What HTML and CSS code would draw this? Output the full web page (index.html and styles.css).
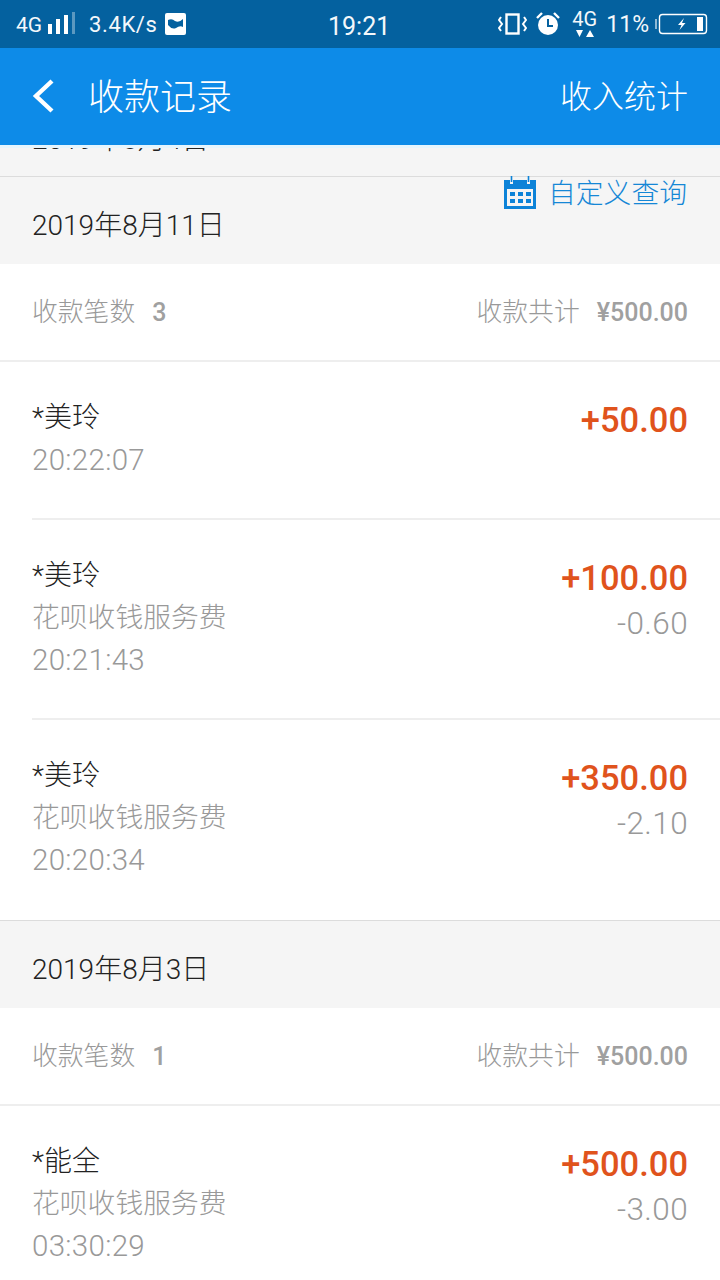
FILE: index.html
```html
<!DOCTYPE html>
<html>
<head>
  <title>收款记录</title>
  <link rel="stylesheet" href="styles.css">
</head>
<body>
  <div class="status-bar">
    <div class="status-left">
      <span class="net">4G</span>
      <svg class="signal" width="30" height="24" viewBox="0 0 30 24">
        <rect x="1" y="12" width="4" height="10" fill="#fff"/>
        <rect x="9" y="7" width="4" height="15" fill="#fff"/>
        <rect x="17" y="3" width="4" height="19" fill="#fff"/>
        <rect x="25" y="0" width="3" height="22" fill="#fff" opacity="0.35"/>
      </svg>
      <span class="speed">3.4K/s</span>
      <svg class="pic" width="21" height="22" viewBox="0 0 21 22">
        <rect width="21" height="22" rx="2" fill="#fff"/>
        <path d="M3 7 Q7 5 10 8 Q14 10 18 6 L18 14 Q15 12 11 15 Q7 17 3 12 Z" fill="#04619f"/>
      </svg>
    </div>
    <div class="status-time">19:21</div>
    <div class="status-right">
      <svg width="29" height="22" viewBox="0 0 29 22">
        <rect x="8.5" y="1.5" width="12" height="19" fill="none" stroke="#fff" stroke-width="2.4"/>
        <path d="M3 4 L1 7 L4 11 L1 15 L3 18 M26 4 L28 7 L25 11 L28 15 L26 18" fill="none" stroke="#fff" stroke-width="2"/>
      </svg>
      <svg class="alarm" width="24" height="24" viewBox="0 0 24 24">
        <circle cx="12" cy="13" r="10" fill="#fff"/>
        <path d="M1 6 L6 1 M23 6 L18 1" stroke="#fff" stroke-width="2.4"/>
        <path d="M12 7 V14 H17" fill="none" stroke="#04619f" stroke-width="2"/>
      </svg>
      <div class="net-arrows">
        <span>4G</span>
        <svg width="18" height="9" viewBox="0 0 18 9">
          <path d="M0 1 H7 L3.5 8 Z M10 8 H18 L14 1 Z" fill="#fff"/>
        </svg>
      </div>
      <span class="percent">11%</span>
      <svg class="battery" width="53" height="22" viewBox="0 0 53 22">
        <path d="M1 6 V16" stroke="#fff" stroke-width="1.6" opacity="0.7"/>
        <rect x="4.5" y="1.5" width="47" height="19" rx="3" fill="none" stroke="#fff" stroke-width="1.4"/>
        <rect x="42" y="4" width="6" height="14" fill="#fff"/>
        <path d="M29 5 L23 12 H26.5 L24.5 17 L30.5 10 H27 Z" fill="#fff"/>
      </svg>
    </div>
  </div>

  <div class="app-bar">
    <svg class="back" width="24" height="34" viewBox="0 0 24 34">
      <path d="M21 2 L5 17 L21 32" fill="none" stroke="#fff" stroke-width="4.4"/>
    </svg>
    <div class="app-title">收款记录</div>
    <div class="app-action">收入统计</div>
  </div>

  <div class="list">
    <div class="clipped-date"><span>2019年8月4日</span></div>

    <div class="date-row first-date">
      <span>2019年8月11日</span>
      <div class="custom-query">
        <svg width="34" height="34" viewBox="0 0 34 34">
          <path d="M1 4 H7 V8 H10 V4 H24 V8 H27 V4 H33 V33 H1 Z" fill="#0d83d8"/>
          <rect x="4" y="13" width="26" height="17" fill="#f5f5f5"/>
          <g fill="#0d83d8">
            <rect x="7" y="16" width="5" height="4"/>
            <rect x="15" y="16" width="5" height="4"/>
            <rect x="23" y="16" width="5" height="4"/>
            <rect x="7" y="23" width="5" height="4"/>
            <rect x="15" y="23" width="5" height="4"/>
            <rect x="23" y="23" width="5" height="4"/>
          </g>
          <path d="M8.5 0 V6 M25.5 0 V6" stroke="#0d83d8" stroke-width="1.6"/>
        </svg>
        <span>自定义查询</span>
      </div>
    </div>
    <div class="summary">
      <div class="sum-left">收款笔数<b>3</b></div>
      <div class="sum-right">收款共计<b>¥500.00</b></div>
    </div>
    <div class="record short">
      <div class="rec-left">
        <div class="name">*美玲</div>
        <div class="sub time">20:22:07</div>
      </div>
      <div class="rec-right">
        <div class="amount">+50.00</div>
      </div>
    </div>
    <div class="record">
      <div class="rec-left">
        <div class="name">*美玲</div>
        <div class="sub">花呗收钱服务费</div>
        <div class="sub time">20:21:43</div>
      </div>
      <div class="rec-right">
        <div class="amount">+100.00</div>
        <div class="fee">-0.60</div>
      </div>
    </div>
    <div class="record last">
      <div class="rec-left">
        <div class="name">*美玲</div>
        <div class="sub">花呗收钱服务费</div>
        <div class="sub time">20:20:34</div>
      </div>
      <div class="rec-right">
        <div class="amount">+350.00</div>
        <div class="fee">-2.10</div>
      </div>
    </div>

    <div class="date-row">
      <span>2019年8月3日</span>
    </div>
    <div class="summary">
      <div class="sum-left">收款笔数<b>1</b></div>
      <div class="sum-right">收款共计<b>¥500.00</b></div>
    </div>
    <div class="record last">
      <div class="rec-left">
        <div class="name">*能全</div>
        <div class="sub">花呗收钱服务费</div>
        <div class="sub time">03:30:29</div>
      </div>
      <div class="rec-right">
        <div class="amount">+500.00</div>
        <div class="fee">-3.00</div>
      </div>
    </div>
  </div>
</body>
</html>
```

FILE: styles.css
```css
* {
  box-sizing: border-box;
}

html, body {
  height: 1280px;
  overflow: hidden;
}

body {
  margin: 0;
  background-color: #fff;
  font-family: Roboto, "Noto Sans CJK SC", sans-serif;
  color: #333;
}

/* Status bar */
.status-bar {
  height: 48px;
  background-color: #04619f;
  color: #f4f8fb;
  display: flex;
  align-items: center;
  justify-content: space-between;
  padding: 0 12px 0 16px;
  position: relative;
}

.status-left,
.status-right {
  display: flex;
  align-items: center;
}

.net {
  font-size: 21px;
  margin-top: 2px;
}

.signal {
  margin-left: 5px;
}

.speed {
  font-size: 22px;
  letter-spacing: 0.6px;
  margin-left: 12px;
}

.pic {
  margin-left: 8px;
}

.status-time {
  font-size: 25px;
  position: absolute;
  left: 328px;
  top: 12px;
}

.alarm {
  margin-left: 9px;
}

.net-arrows {
  display: flex;
  flex-direction: column;
  align-items: center;
  margin-left: 11px;
  font-size: 20px;
  line-height: 19px;
  width: 27px;
}

.net-arrows svg {
  display: block;
}

.percent {
  font-size: 23px;
  margin-left: 8px;
}

.battery {
  margin-left: 6px;
}

/* App bar */
.app-bar {
  height: 97px;
  background-color: #0d8be8;
  color: #fff;
  display: flex;
  align-items: center;
  padding: 0 32px;
  position: relative;
  z-index: 2;
}

.back {
  flex: none;
  margin-left: -1px;
  margin-bottom: 1px;
}

.app-title {
  font-size: 36px;
  margin-left: 33px;
  margin-bottom: 6px;
  flex: 1;
  font-weight: 300;
}

.app-action {
  font-size: 32px;
  margin-bottom: 6px;
  font-weight: 300;
}

/* List */
.list {
  background-color: #fff;
}

.clipped-date {
  height: 31px;
  background-color: #f5f5f5;
  border-top: 3px solid #e6f5fd;
  padding-left: 32px;
  overflow: hidden;
  font-size: 28px;
  font-weight: 300;
  line-height: 30px;
  color: #222;
}

.clipped-date span {
  display: block;
  margin-top: -23px;
}

.date-row {
  height: 88px;
  background-color: #f5f5f5;
  border-top: 1px solid #dcdcdc;
  display: flex;
  align-items: center;
  padding: 4px 32px 0;
  font-size: 28px;
  font-weight: 300;
  color: #222;
  position: relative;
}

.custom-query {
  position: absolute;
  right: 33px;
  top: -1px;
  display: flex;
  align-items: center;
  color: #1587d6;
  font-size: 27.8px;
  height: 34px;
}

.custom-query svg {
  margin-right: 11px;
}

.custom-query span {
  margin-top: -5px;
}

.summary {
  height: 98px;
  border-bottom: 2px solid #eee;
  display: flex;
  align-items: center;
  justify-content: space-between;
  padding: 0 32px 6px 32px;
  font-size: 25.8px;
  font-weight: 300;
  color: #999;
}

.summary b {
  font-weight: 500;
  font-size: 25px;
  color: #a0a0a0;
}

.sum-left b {
  margin-left: 17px;
}

.sum-right b {
  margin-left: 17px;
}

/* Records */
.record {
  height: 200px;
  padding: 35px 32px 0 0;
  margin-left: 32px;
  border-bottom: 2px solid #eee;
  display: flex;
  justify-content: space-between;
}

.record.short {
  height: 158px;
}

.record.last {
  margin-left: 0;
  padding-left: 32px;
  border-bottom: 0;
}

.name {
  font-size: 28px;
  font-weight: 300;
  line-height: 42px;
  color: #222;
}

.sub {
  font-size: 27.8px;
  font-weight: 300;
  line-height: 42px;
  color: #999;
}

.sub.time {
  font-size: 29.5px;
  letter-spacing: 0.3px;
}

.rec-right {
  text-align: right;
}

.amount {
  font-size: 34.5px;
  line-height: 46px;
  font-weight: 500;
  color: #e0531c;
}

.fee {
  font-size: 31.5px;
  font-weight: 300;
  line-height: 46px;
  letter-spacing: 0.4px;
  color: #999;
}
```
